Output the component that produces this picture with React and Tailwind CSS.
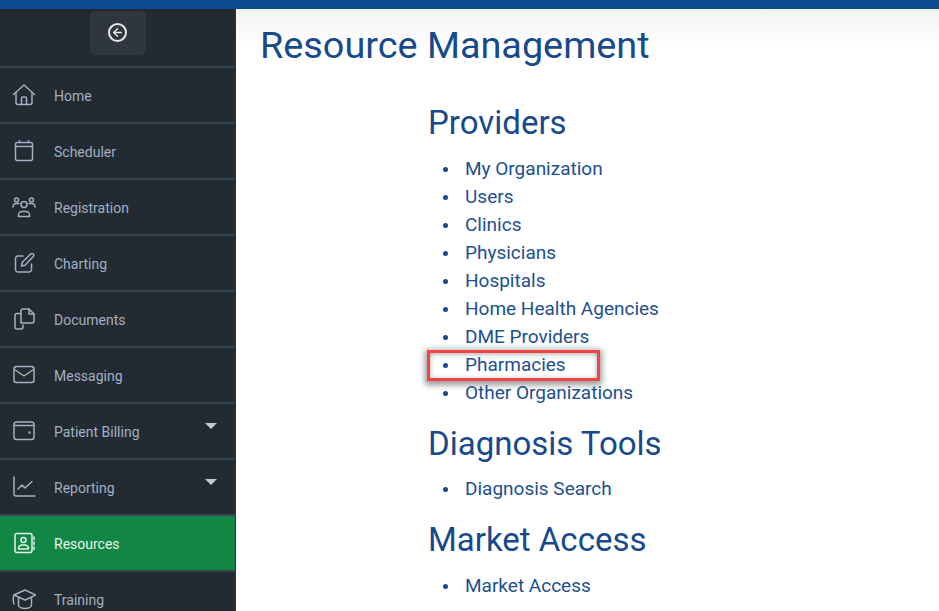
import React from 'react';
import { ArrowLeft } from 'lucide-react';

const stroke = { fill: 'none', stroke: 'currentColor', strokeWidth: 1.5, strokeLinecap: 'round', strokeLinejoin: 'round' };

const icons = {
  home: <><path d="M1.500 11.500 12 2l10.500 9.500" /><path d="M4 9.500v10a2 2 0 0 0 2 2h12a2 2 0 0 0 2-2v-10" /><path d="M9.500 21.500v-6a1.500 1.500 0 0 1 1.500-1.500h2a1.500 1.500 0 0 1 1.500 1.500v6" /></>,
  calendar: <><rect x="3.500" y="3.500" width="17" height="18" rx="2" /><path d="M3.500 7.500h17M7.500 1.500v2M16.500 1.500v2" /></>,
  users: <><circle cx="12" cy="9.500" r="3" /><path d="M6.500 21.500v-1.500a3.500 3.500 0 0 1 3.500-3.500h4a3.500 3.500 0 0 1 3.500 3.500v1.500z" /><circle cx="4.500" cy="5" r="2" /><circle cx="19.500" cy="5" r="2" /><path d="M1 12c0-2 1.500-3.500 3.500-3.500H7M23 12c0-2-1.500-3.500-3.500-3.500H17" /></>,
  edit: <><path d="M11 5H6a2.500 2.500 0 0 0-2.500 2.500v11A2.500 2.500 0 0 0 6 21h11a2.500 2.500 0 0 0 2.500-2.500V13" /><path d="M9.500 15l.8-3.700L19 2.800a1.800 1.800 0 0 1 2.500 2.500L13 14.200z" /></>,
  docs: <><path d="M9 6.500H5a2 2 0 0 0-2 2V20a2 2 0 0 0 2 2h4a2 2 0 0 0 2-2v-2" /><path d="M9 16V4a2 2 0 0 1 2-2h6l5 5v7a2 2 0 0 1-2 2z" /><path d="M17 2v5h5" /></>,
  mail: <><rect x="2" y="3.500" width="20" height="16" rx="2.500" /><path d="M2.500 6.500 12 13l9.500-6.500" /></>,
  wallet: <><rect x="2" y="3" width="20" height="17.500" rx="2.500" /><path d="M2 6.500h20" /><circle cx="17.500" cy="13.500" r=".5" /></>,
  chart: <><path d="M2 2v17a2 2 0 0 0 2 2h19" /><path d="M6 14l4-4 3 3 7-6.500" /></>,
  book: <><rect x="3" y="2.500" width="17" height="19" rx="2" /><circle cx="11.500" cy="9" r="2.500" /><path d="M6.500 18v-1a4 4 0 0 1 4-3h2a4 4 0 0 1 4 3v1z" /><path d="M22 6v2.500M22 11v2.500M22 16v2.500" /></>,
  school: <><path d="M13 3 2 8l11 5 11-5z" /><path d="M6.500 10.500V18c0 2 3 3.500 6.500 3.500s6.500-1.500 6.500-3.500v-7.500" /><path d="M2 8c-1 3-1 6 0 9" /></>,
};

const navItems = [
  { label: 'Home', icon: 'home' },
  { label: 'Scheduler', icon: 'calendar' },
  { label: 'Registration', icon: 'users' },
  { label: 'Charting', icon: 'edit' },
  { label: 'Documents', icon: 'docs' },
  { label: 'Messaging', icon: 'mail' },
  { label: 'Patient Billing', icon: 'wallet', caret: true },
  { label: 'Reporting', icon: 'chart', caret: true },
  { label: 'Resources', icon: 'book', active: true },
  { label: 'Training', icon: 'school' },
];

const sections = [
  { title: 'Providers', listGap: 'mt-[12px]', links: ['My Organization', 'Users', 'Clinics', 'Physicians', 'Hospitals', 'Home Health Agencies', 'DME Providers', 'Pharmacies', 'Other Organizations'] },
  { title: 'Diagnosis Tools', listGap: 'mt-[11px]', links: ['Diagnosis Search'] },
  { title: 'Market Access', listGap: 'mt-[12px]', links: ['Market Access'] },
];

function NavRow({ item }) {
  return (
    <div className={`relative flex h-[56px] shrink-0 items-center border-b-2 border-[#38444d] pl-[12px] ${item.active ? 'bg-[#128644] text-[#e6f4ec]' : 'text-[#a3afc2]'}`}>
      <svg viewBox="0 0 24 24" className="h-[24px] w-[24px] shrink-0" {...stroke}>
        {icons[item.icon]}
      </svg>
      <span className="ml-[18px] translate-y-[1px] text-[14px]">{item.label}</span>
      {item.caret && (
        <span className="absolute right-[18px] top-[19px] h-0 w-0 border-x-[6px] border-t-[6px] border-x-transparent border-t-[#c4c9ce]" />
      )}
    </div>
  );
}

export default function App() {
  return (
    <div className="flex h-[611px] w-[939px] flex-col overflow-hidden bg-white font-['Roboto',sans-serif]">
      <div className="h-[9px] shrink-0 bg-[#0a4a8f]" />
      <div className="flex min-h-0 flex-1">
        <aside className="flex w-[236px] shrink-0 flex-col border-r border-[#2b353c] bg-[#222b32]">
          <div className="flex h-[59px] shrink-0 justify-center border-b-2 border-[#38444d] pt-[2px]">
            <div className="flex h-[44px] w-[56px] items-center justify-center rounded-[5px] bg-[#30363e] pb-[2px] text-[#e8e8e4]">
              <span className="flex h-[19px] w-[19px] items-center justify-center rounded-full border-2 border-[#e8e8e4]">
                <ArrowLeft size={13} strokeWidth={2.5} />
              </span>
            </div>
          </div>
          {navItems.map((item) => (
            <NavRow key={item.label} item={item} />
          ))}
        </aside>
        <main className="min-w-0 flex-1 bg-gradient-to-b from-[#f3f3f3] via-white via-[6%] to-white pl-[24px]">
          <h1 className="mt-[13px] text-[37.800px] leading-[46px] text-[#17498c]">Resource Management</h1>
          <div className="ml-[168px] mt-[35px]">
            {sections.map((section) => (
              <section key={section.title} className="mb-[17px]">
                <h2 className="text-[33px] leading-[40px] text-[#17498c]">{section.title}</h2>
                <ul className={`${section.listGap} pl-[15px] text-[19px] leading-[28px] text-[#1d4f91]`}>
                  {section.links.map((link) => (
                    <li key={link} className="relative flex items-center">
                      <span className="mr-[17px] h-[5px] w-[5px] shrink-0 rounded-full bg-[#17498c]" />
                      {link}
                      {link === 'Pharmacies' && (
                        <span className="absolute left-[-16px] top-[-1px] h-[31px] w-[173px] border-[3px] border-[#f54343] shadow-[0_2px_6px_2px_rgba(0,0,0,0.4),inset_0_1px_5px_rgba(0,0,0,0.35)]" />
                      )}
                    </li>
                  ))}
                </ul>
              </section>
            ))}
          </div>
        </main>
      </div>
    </div>
  );
}
